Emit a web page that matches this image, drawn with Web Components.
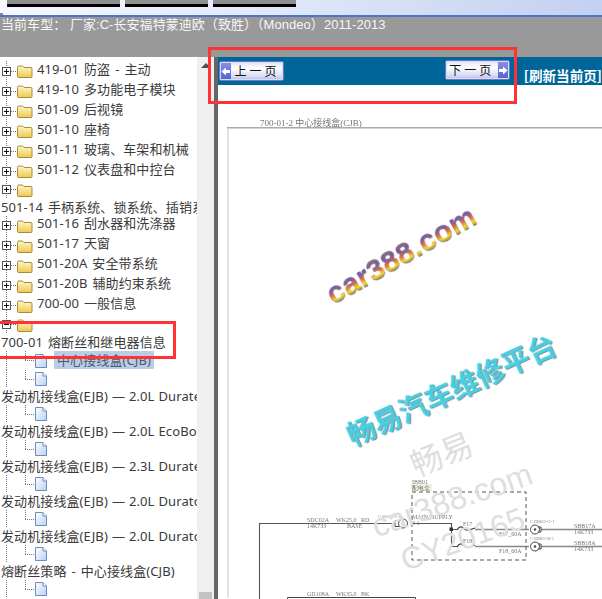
<!DOCTYPE html>
<html lang="zh"><head><meta charset="utf-8"><title>维修手册</title>
<style>
html,body{margin:0;padding:0;background:#fff}
body{width:602px;height:599px;overflow:hidden;position:relative;font-family:"Noto Sans","Noto Sans CJK SC",sans-serif}
tree-row.tight{word-spacing:.5px}
</style></head><body>
<app-shell>
  <top-band>当前车型： 厂家:C-长安福特蒙迪欧（致胜）（Mondeo）2011-2013</top-band>
  <folder-tree>
    <tree-row kind="folder">419-01 防盗 - 主动</tree-row>
    <tree-row kind="folder">419-10 多功能电子模块</tree-row>
    <tree-row kind="folder">501-09 后视镜</tree-row>
    <tree-row kind="folder">501-10 座椅</tree-row>
    <tree-row kind="folder">501-11 玻璃、车架和机械</tree-row>
    <tree-row kind="folder">501-12 仪表盘和中控台</tree-row>
    <tree-row kind="folder" style="height:17.9px"></tree-row>
    <tree-row kind="text">501-14 手柄系统、锁系统、插销系统</tree-row>
    <tree-row kind="folder">501-16 刮水器和洗涤器</tree-row>
    <tree-row kind="folder">501-17 天窗</tree-row>
    <tree-row kind="folder">501-20A 安全带系统</tree-row>
    <tree-row kind="folder">501-20B 辅助约束系统</tree-row>
    <tree-row kind="folder">700-00 一般信息</tree-row>
    <tree-row kind="folder" open style="height:18.2px"></tree-row>
    <tree-row kind="text">700-01 熔断丝和继电器信息</tree-row>
    <tree-row kind="file" selected>中心接线盒(CJB)</tree-row>
    <tree-row kind="file"></tree-row>
    <tree-row kind="text" class="tight">发动机接线盒(EJB) — 2.0L Duratec</tree-row>
    <tree-row kind="file"></tree-row>
    <tree-row kind="text" class="tight">发动机接线盒(EJB) — 2.0L EcoBoost</tree-row>
    <tree-row kind="file"></tree-row>
    <tree-row kind="text" class="tight">发动机接线盒(EJB) — 2.3L Duratec</tree-row>
    <tree-row kind="file"></tree-row>
    <tree-row kind="text" class="tight">发动机接线盒(EJB) — 2.0L Duratorq</tree-row>
    <tree-row kind="file"></tree-row>
    <tree-row kind="text" class="tight">发动机接线盒(EJB) — 2.0L Duratorq</tree-row>
    <tree-row kind="file"></tree-row>
    <tree-row kind="text">熔断丝策略 - 中心接线盒(CJB)</tree-row>
    <tree-row kind="file"></tree-row>
  </folder-tree>
  <tree-scrollbar></tree-scrollbar>
  <doc-view></doc-view>
</app-shell>
<red-box style="left:208px;top:47px;width:303px;height:51px"></red-box>
<red-box style="left:-4px;top:321px;width:174px;height:32px"></red-box>
<script>
function def(name, css, html, init){
  customElements.define(name, class extends HTMLElement{
    constructor(){super();const r=this.attachShadow({mode:'open'});r.innerHTML='<style>'+css+'</style>'+(html||'<slot></slot>');}
    connectedCallback(){ if(init) init.call(this,this.shadowRoot); }
  });
}
def('app-shell',`
:host{display:grid;grid-template-columns:197px 17px 1fr;grid-template-rows:57px 1fr;width:602px;height:599px;overflow:hidden}
::slotted(top-band){grid-column:1/4}
`);
def('top-band',`
:host{display:flex;flex-direction:column;background:#999;color:#f6f6f6;font:13px/16px "Liberation Sans","Noto Sans CJK SC",sans-serif;letter-spacing:.05px}
.strip{height:15px;border-bottom:2px solid #4d74c9;background:linear-gradient(#8a8a8a,#8a8a8a) 0 13px/3px 4px no-repeat,linear-gradient(90deg,#f6f8fe,#e4eafa 40%,#c2d1f0);display:flex;gap:5px;padding-left:7px}
.strip i{display:block;height:4px;border-bottom:3px solid #000;background:#8f8f8f}
.txt{padding:0 0 0 1px;white-space:nowrap}
`,`<div class="strip"><i style="width:113px"></i><i style="width:83px"></i><i style="width:83px"></i></div><div class="txt"><slot></slot></div>`);
def('folder-tree',`
:host{display:block;overflow:hidden;background:#fff;padding-top:4px;white-space:nowrap}
`);
const folder=`<svg width="16" height="14" viewBox="0 0 16 14"><defs><linearGradient id="f" x1="0" y1="0" x2="0" y2="1"><stop offset="0" stop-color="#fff8c8"/><stop offset="1" stop-color="#f0c850"/></linearGradient></defs><path d="M.5 3.5 Q.5 2 2 2H5.5L7 3.5H14Q15 3.5 15 5V12.5Q15 13.5 14 13.5H1.5Q.5 13.5 .5 12.5Z" fill="url(#f)" stroke="#a88a3c"/></svg>`;
const page=`<svg width="12" height="14" viewBox="0 0 12 14"><defs><linearGradient id="p" x1="0" y1="0" x2="1" y2="1"><stop offset="0" stop-color="#fff"/><stop offset="1" stop-color="#b8d2f2"/></linearGradient></defs><path d="M.5.5H8L11.5 4V13.5H.5Z" fill="url(#p)" stroke="#6d8cc0"/><path d="M8 .5V4H11.5" fill="#fff" stroke="#6d8cc0"/></svg>`;
def('tree-row',`
:host{display:flex;align-items:center;box-sizing:border-box;color:#3a3a3a;font:13px/17px "Noto Sans","Noto Sans CJK SC",sans-serif;letter-spacing:.1px;word-spacing:1.5px}
:host([kind=folder]){height:20px;padding-left:2px;background:repeating-linear-gradient(to bottom,#777 0 1px,transparent 1px 2px) 6px 0/1px 100% no-repeat}
:host([kind=text]){height:17px;padding-left:1px;background:#fff}
:host([kind=file]){height:18px;padding-left:35px;background:
  repeating-linear-gradient(to bottom,#777 0 1px,transparent 1px 2px) 6px 0/1px 100% no-repeat,
  repeating-linear-gradient(to bottom,#777 0 1px,transparent 1px 2px) 25px 0/1px 50% no-repeat,
  repeating-linear-gradient(to right,#777 0 1px,transparent 1px 2px) 25px 50%/10px 1px no-repeat}
:host([selected]){height:19px}
.box{flex:none;width:9px;height:9px;box-sizing:border-box;border:1px solid #555;background:#fff;display:grid;place-items:center}
.box i{display:block;width:5px;height:5px;background:linear-gradient(#111,#111) center/5px 1px no-repeat,linear-gradient(#111,#111) center/1px 5px no-repeat}
:host([open]) .box i{background:linear-gradient(#111,#111) center/5px 1px no-repeat}
.dash{flex:none;width:6px;height:1px;background:repeating-linear-gradient(to right,#777 0 1px,transparent 1px 2px)}
.ic{flex:none;display:flex}
.label{margin-top:-4px;margin-left:4px}
:host([kind=text]) .label{margin:0}
:host([kind=file]) .label{margin:-2px 0 0 7px;padding:0 3px;line-height:18px}
:host([selected]) .label{background:#b9cde6;color:#4a5a70}
`,'',function(r){
  const k=this.getAttribute('kind');
  let h='';
  if(k==='folder') h=`<span class="box"><i></i></span><span class="dash"></span><span class="ic">${folder}</span><span class="label"><slot></slot></span>`;
  if(k==='text') h=`<span class="label"><slot></slot></span>`;
  if(k==='file') h=`<span class="ic">${page}</span>`+(this.hasAttribute('selected')?`<span class="label"><slot></slot></span>`:'');
  r.innerHTML=r.querySelector('style').outerHTML+h;
});
def('tree-scrollbar',`
:host{display:flex;flex-direction:column;align-items:center;background:#f0f0f0}
.up{margin-top:6px;width:0;height:0;border:5px solid transparent;border-top:0;border-bottom:5px solid #505050}
.th{margin-top:auto;width:13px;height:7px;background:#c2c2c2}
`,`<div class="up"></div><div class="th"></div>`);
def('nav-button',`
:host{display:flex;box-sizing:border-box;width:67px;height:20px;border:1px solid #6e78c8;border-radius:2px;outline:1px solid #d8dcf4;outline-offset:-2px;background:linear-gradient(#dfe2f8,#fff 35%,#d7daf5 80%,#b4b9e8);color:#111;font:12px/18px "Noto Sans CJK SC","Noto Sans",sans-serif;overflow:hidden}
.arr{flex:none;width:11px;background:linear-gradient(#8a90e4,#5660d0);display:grid;place-items:center}
.t{flex:1;text-align:center;letter-spacing:3px;white-space:nowrap}
`,`<span class="arr"><svg width="9" height="9" viewBox="0 0 9 9"><path class="p" fill="#fff"/></svg></span><span class="t"><slot></slot></span>`,function(r){
  const n=this.getAttribute('dir')==='next';
  r.querySelector('.p').setAttribute('d',n?'M0 3H4V0.5L8.5 4.5L4 8.5V6H0Z':'M9 3H5V0.5L.5 4.5L5 8.5V6H9Z');
  if(n){const c=r.querySelector('.arr');c.parentNode.appendChild(c);}
});
def('doc-view',`
:host{display:flex;flex-direction:column;position:relative;overflow:hidden;background:#fff;border-left:4px solid;border-image:linear-gradient(90deg,#666 0 50%,#000 50%) 1;min-width:0}
.bar{flex:none;height:28px;background:#069;display:flex;align-items:flex-start;padding-left:1px;white-space:nowrap}
.prev{margin-top:4px}
.next{margin-top:3px;margin-left:161px}
.ref{margin-left:14px;margin-top:9px;color:#fff;font:bold 13.6px/18px "Noto Sans CJK SC",sans-serif}
.cap{flex:none;height:42px;box-sizing:border-box;padding:33px 0 0 42px;font:9px/10px "Liberation Serif","Noto Sans CJK SC",serif;color:#777;white-space:nowrap;filter:blur(.35px)}
svg.d{display:block;margin-left:9px;flex:none;filter:blur(.5px)}
.wm{position:absolute;white-space:nowrap;transform-origin:0 50%;line-height:1}
.g{color:#dedede;font-family:"Liberation Sans","Noto Sans CJK SC",sans-serif}
.c1{left:110px;top:222px;font:bold 30px/1.1 "Liberation Sans",sans-serif;letter-spacing:.2px;transform:rotate(-29.5deg);background:linear-gradient(#8a7a50 18%,#7a5aa8 36%,#8e5a98 46%,#e0703a 58%,#f2d836 72%,#8a7040 88%);-webkit-background-clip:text;background-clip:text;color:transparent;filter:drop-shadow(0 1px 0 #777) blur(.3px)}
.c2{left:130px;top:365px;font:bold 28.3px/1 "Noto Sans CJK SC",sans-serif;color:#48cfe2;transform:rotate(-24.5deg);filter:drop-shadow(1px 1px 0 #7a9298) blur(.2px)}
`,`
<div class="bar"><nav-button class="prev" dir="prev">上一页</nav-button><nav-button class="next" dir="next">下一页</nav-button><span class="ref">[刷新当前页]</span></div>
<div class="cap">700-01-2 中心接线盒(CJB)</div>
<svg class="d" width="375" height="472" viewBox="227 127 375 472" font-family="Liberation Serif" font-size="6" fill="#777">
  <path d="M228 598V128H602" fill="none" stroke="#e2e2e2" stroke-width="2"/>
  <path d="M227 127.5H602" fill="none" stroke="#aaa" stroke-width="1.6"/>
  <path d="M259.5 600V523.5H395M410 523.5H451.5V546.5M451.5 529.5H458M451.5 546.5H458" fill="none" stroke="#555" stroke-width="1.1"/>
  <path d="M475 529.5H529M541 529.5H602M475 546.5H529M541 546.5H602" fill="none" stroke="#888" stroke-width="1.6"/>
  <path d="M457 530q3-5 6-2t6 2 6-2M457 547q3-5 6-2t6 2 6-2" fill="none" stroke="#333" stroke-width="1.1"/>
  <rect x="449.5" y="527.5" width="3.5" height="3.5" fill="#333"/>
  <rect x="412" y="492" width="114" height="68" fill="none" stroke="#555" stroke-dasharray="4 3"/>
  <path d="M287.5 600V597.5H415.5V600" fill="none" stroke="#444"/>
  <g fill="#fff" stroke="#444"><circle cx="403" cy="523.5" r="4.5"/><circle cx="535" cy="529.5" r="4.5"/><circle cx="535" cy="546.5" r="4.5"/></g>
  <g fill="#444"><circle cx="403" cy="523.5" r="1.2"/><circle cx="535" cy="529.5" r="1.2"/><circle cx="535" cy="546.5" r="1.2"/></g>
  <path d="M395 520.5H399M395 526.5H399M395 520.5V526.5M541 527H538M541 532H538M541 527V532M541 544H538M541 549H538M541 544V549" fill="none" stroke="#444"/>
  <rect x="411" y="484" width="21" height="7" fill="#f2f2dc"/>
  <text x="307" y="522">SDC02A</text><text x="336" y="522">WK</text><text x="346" y="522">25,0</text><text x="361" y="522">RD</text>
  <text x="307" y="528">14K733</text><text x="347" y="528">BASE</text>
  <text x="378" y="518" font-size="4.5" fill="#999">C1R001-0-1</text>
  <text x="412" y="484">IBB01</text><text x="412" y="490">配电盒</text>
  <text x="412" y="519">MAIN_SUPPLY</text><text x="412" y="525">3 1</text>
  <text x="463" y="526">F17</text><text x="463" y="543">F18</text>
  <text x="499" y="536">F17_60A</text><text x="499" y="553">F18_60A</text>
  <text x="530" y="523" font-size="4.5" fill="#888">C1BB02-G-1</text><text x="530" y="540" font-size="4.5" fill="#888">C1BB03-B-1</text>
  <text x="574" y="528">SBB17A</text><text x="574" y="534">14K733</text><text x="574" y="545">SBB18A</text><text x="574" y="551">14K733</text>
  <text x="307" y="596">GD108A</text><text x="336" y="596">WK</text><text x="346" y="596">35,0</text><text x="361" y="596">BK</text>
</svg>
<div class="wm g" style="left:193px;top:391px;font-size:32px;transform:rotate(-22deg);font-family:'Noto Sans CJK SC',sans-serif">畅易</div>
<div class="wm g" style="left:155px;top:454px;font-size:32px;transform:rotate(-19deg)">car388.com</div>
<div class="wm g" style="left:184px;top:489px;font-size:31px;transform:rotate(-20deg)">CY20165</div>
<div class="wm c1">car388.com</div>
<div class="wm c2">畅易汽车维修平台</div>
`);
def('red-box',`:host{display:block;position:absolute;border:3px solid #ff3333;pointer-events:none}`,'<span></span>');
</script>
</body></html>
